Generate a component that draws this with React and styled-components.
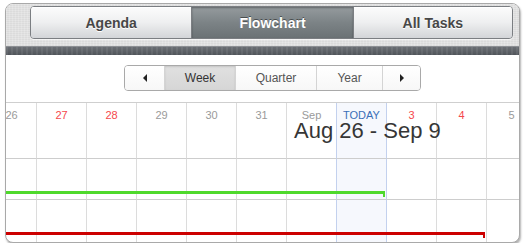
import React from 'react';
import styled, { createGlobalStyle } from 'styled-components';

const GlobalStyle = createGlobalStyle`
  html, body {
    margin: 0;
    padding: 0;
    background: #fff;
    font-family: "Liberation Sans", Arial, sans-serif;
  }
`;

const Frame = styled.div`
  box-sizing: border-box;
  width: 515px;
  height: 240px;
  margin: 3px 0 0 5px;
  border: 1px solid #a9a9a9;
  border-radius: 8px;
  box-shadow: 1px 2px 2px rgba(0, 0, 0, 0.3);
  overflow: hidden;
  background: #fff;
  display: flex;
  flex-direction: column;
`;

const Header = styled.div`
  height: 42px;
  box-sizing: border-box;
  padding: 2px 6px 0 24px;
  background-color: #e2e2e2;
  background-image:
    repeating-linear-gradient(90deg, rgba(255, 255, 255, 0.18) 0 1px, transparent 1px 3px),
    repeating-linear-gradient(0deg, rgba(0, 0, 0, 0.03) 0 1px, transparent 1px 2px);
  display: flex;
  align-items: flex-start;
`;

const ViewGroup = styled.div`
  display: flex;
  border: 1px solid #7b7e82;
  border-radius: 4px;
  overflow: hidden;
  box-shadow: 0 1px 0 rgba(255, 255, 255, 0.7);
`;

const ViewButton = styled.div`
  box-sizing: border-box;
  width: ${(p) => p.$w}px;
  height: 31px;
  display: flex;
  align-items: center;
  justify-content: center;
  font-size: 14px;
  font-weight: bold;
  border-left: ${(p) => (p.$first ? 'none' : '1px solid #7b7e82')};
  color: ${(p) => (p.$active ? '#fff' : '#474747')};
  text-shadow: ${(p) => (p.$active ? '0 -1px 0 rgba(0,0,0,0.45)' : '0 1px 0 #fff')};
  background: ${(p) =>
    p.$active
      ? 'linear-gradient(#959b9e, #7c8386 50%, #6b7275)'
      : 'linear-gradient(#fcfcfc, #eeeff0 50%, #d3d5d8)'};
  box-shadow: ${(p) =>
    p.$active ? 'inset 0 1px 2px rgba(0,0,0,0.35)' : 'inset 0 1px 0 #fff'};
`;

const Stripe = styled.div`
  height: 9px;
  background-color: #585c62;
  border-top: 1px solid #8c8f93;
  box-sizing: border-box;
  background-image:
    repeating-linear-gradient(90deg, rgba(255, 255, 255, 0.07) 0 2px, transparent 2px 5px),
    linear-gradient(#6a6e73, #50545a);
`;

const Toolbar = styled.div`
  height: 48px;
  box-sizing: border-box;
  border-bottom: 1px solid #cfcfcf;
  padding: 10px 0 0 118px;
  display: flex;
  align-items: flex-start;
`;

const Segmented = styled.div`
  display: flex;
  height: 26px;
  box-sizing: border-box;
  border: 1px solid #a9a9a9;
  border-radius: 4px;
  overflow: hidden;
`;

const Segment = styled.div`
  box-sizing: border-box;
  width: ${(p) => p.$w}px;
  display: flex;
  align-items: center;
  justify-content: center;
  font-size: 12px;
  color: ${(p) => (p.$active ? '#333' : '#555')};
  border-left: ${(p) => (p.$first ? 'none' : '1px solid #d4d4d4')};
  background: ${(p) =>
    p.$active ? 'linear-gradient(#e0e0e0, #d6d6d6)' : 'linear-gradient(#fff, #f7f7f7)'};
  box-shadow: ${(p) => (p.$active ? 'inset 0 1px 2px rgba(0,0,0,0.12)' : 'none')};
`;

const Arrow = styled.span`
  width: 0;
  height: 0;
  border-top: 4px solid transparent;
  border-bottom: 4px solid transparent;
  ${(p) =>
    p.$dir === 'left'
      ? 'border-right: 4px solid #222;'
      : 'border-left: 4px solid #222;'}
`;

const Timeline = styled.div`
  position: relative;
  flex: 1;
  overflow: hidden;
`;

const Grid = styled.div`
  display: grid;
  grid-template-columns: repeat(11, 50px);
  grid-template-rows: 56px 41px 42px;
  margin-left: -19px;
`;

const Cell = styled.div`
  box-sizing: border-box;
  grid-column: ${(p) => p.$col};
  grid-row: ${(p) => p.$row};
  border-right: 1px solid ${(p) => (p.$todayEdge ? '#c3d1ee' : '#dcdcdc')};
  border-bottom: ${(p) => (p.$row < 3 ? '1px solid #cdcdcd' : 'none')};
  background: ${(p) => (p.$today ? '#f6f8fd' : 'transparent')};
  text-align: center;
  padding-top: 6px;
  font-size: 11px;
  line-height: 12px;
  color: ${(p) => p.$color || '#9a9a9a'};
`;

const Bar = styled.div`
  position: relative;
  grid-column: 1 / ${(p) => p.$end};
  grid-row: ${(p) => p.$row};
  align-self: end;
  height: 3px;
  margin: 0 2px ${(p) => p.$bottom}px 0;
  background: ${(p) => p.$color};

  &::after {
    content: '';
    position: absolute;
    right: 0;
    top: 0;
    width: 2px;
    height: 6px;
    background: ${(p) => p.$color};
  }
`;

const RangeTitle = styled.div`
  position: absolute;
  left: 288px;
  top: 20px;
  font-size: 22px;
  line-height: 16px;
  color: #363636;
  pointer-events: none;
`;

const days = [
  { label: '26' },
  { label: '27', color: '#f5474b' },
  { label: '28', color: '#f5474b' },
  { label: '29' },
  { label: '30' },
  { label: '31' },
  { label: 'Sep' },
  { label: 'TODAY', color: '#3a6fb8', today: true },
  { label: '3', color: '#f5474b' },
  { label: '4', color: '#f5474b' },
  { label: '5' },
];

const views = [
  { name: 'Agenda', w: 161 },
  { name: 'Flowchart', w: 162, active: true },
  { name: 'All Tasks', w: 160 },
];

const tasks = [
  { row: 2, end: 9, color: '#4fd92c', bottom: 6 },
  { row: 3, end: 11, color: '#cc0000', bottom: 7 },
];

function App() {
  return (
    <>
      <GlobalStyle />
      <Frame>
        <Header>
          <ViewGroup>
            {views.map((v, i) => (
              <ViewButton key={v.name} $w={v.w} $active={v.active} $first={i === 0}>
                {v.name}
              </ViewButton>
            ))}
          </ViewGroup>
        </Header>
        <Stripe />
        <Toolbar>
          <Segmented>
            <Segment $w={39} $first>
              <Arrow $dir="left" />
            </Segment>
            <Segment $w={71} $active>Week</Segment>
            <Segment $w={81}>Quarter</Segment>
            <Segment $w={66}>Year</Segment>
            <Segment $w={38}>
              <Arrow $dir="right" />
            </Segment>
          </Segmented>
        </Toolbar>
        <Timeline>
          <Grid>
            {[1, 2, 3].map((row) =>
              days.map((d, i) => (
                <Cell
                  key={`${row}-${i}`}
                  $row={row}
                  $col={i + 1}
                  $color={d.color}
                  $today={d.today}
                  $todayEdge={d.today || (days[i + 1] && days[i + 1].today)}
                >
                  {row === 1 ? d.label : null}
                </Cell>
              ))
            )}
            {tasks.map((t) => (
              <Bar key={t.row} $row={t.row} $end={t.end} $color={t.color} $bottom={t.bottom} />
            ))}
          </Grid>
          <RangeTitle>Aug 26 - Sep 9</RangeTitle>
        </Timeline>
      </Frame>
    </>
  );
}

export default App;
